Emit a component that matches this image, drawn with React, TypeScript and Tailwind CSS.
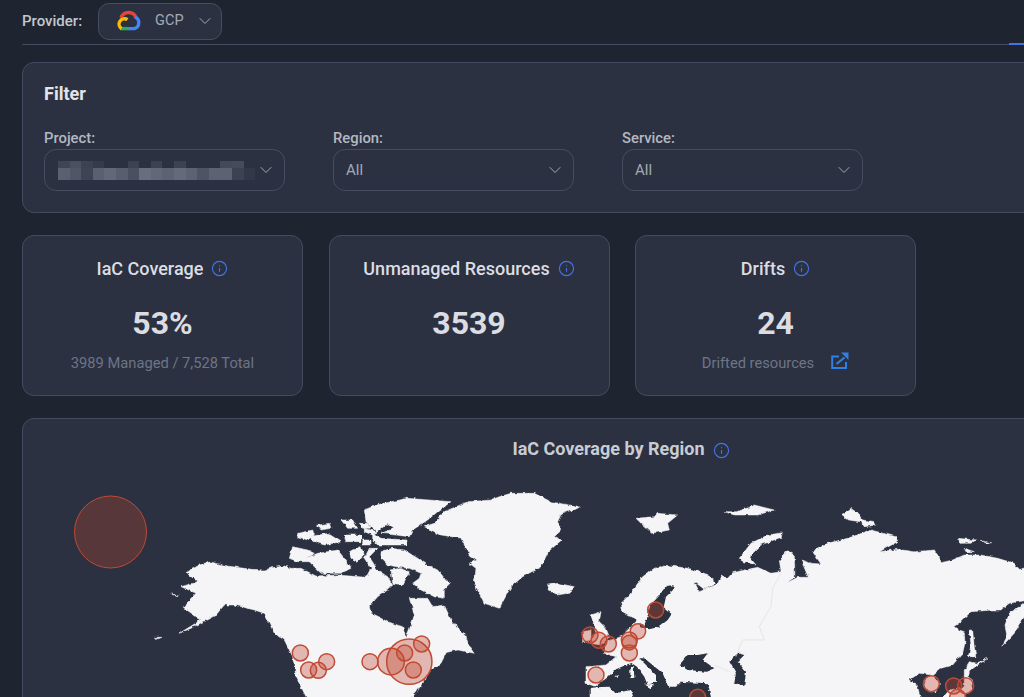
import { ChevronDown, Info } from "lucide-react";

const font = { fontFamily: "Roboto, 'Liberation Sans', sans-serif" };

// pixelated project name, the reference has it blurred out
const blurTop = [
    "bg-[#3f4555]", "bg-[#4a5060]", "bg-[#3c4252]", "bg-[#353b4b]", "bg-transparent", "bg-transparent",
    "bg-[#3c4252]", "bg-transparent", "bg-[#3c4252]", "bg-transparent", "bg-[#3c4252]", "bg-transparent",
    "bg-transparent", "bg-transparent", "bg-[#434959]", "bg-[#454b5b]", "bg-transparent",
];
const blurBottom = [
    "bg-[#5a6070]", "bg-[#505666]", "bg-[#3e4454]", "bg-[#5a6070]", "bg-[#626878]", "bg-[#585e6e]",
    "bg-[#4a5060]", "bg-[#686e7e]", "bg-[#626878]", "bg-[#5c6272]", "bg-[#646a7a]", "bg-[#5c6272]",
    "bg-[#4e5464]", "bg-[#5c6272]", "bg-[#5c6272]", "bg-[#3c4252]", "bg-[#323848]",
];

const naCircles = [
    [478, 519, 24], [503, 570, 24], [532, 571, 24], [557, 545, 24], [687, 545, 24], [750, 545, 40],
    [805, 545, 68], [791, 519, 24], [842, 492, 24], [817, 570, 24],
];
const euCircles = [
    [75, 585, 24], [57, 465, 24], [84, 481, 24], [112, 492, 24], [175, 480, 24], [175, 488, 22],
    [175, 519, 24], [201, 454, 23], [254, 390, 24], [380, 652, 24], [1081, 611, 24], [1148, 618, 24],
    [1184, 617, 24], [1160, 652, 24],
];

function GcpLogo() {
    return (
        <svg width="27" height="22" viewBox="0 0 27 22" fill="none" strokeWidth="3.4">
            <path d="M6 8 A8 8 0 0 1 21 7.5" stroke="#ea4335" />
            <path d="M20 7 A6.2 6.2 0 0 1 19.5 18.6 H13" stroke="#4285f4" />
            <path d="M13.5 18.6 H5" stroke="#34a853" />
            <path d="M12.5 9.6 A5.4 5.4 0 1 0 6.5 18.6" stroke="#fbbc05" />
        </svg>
    );
}

function ExternalIcon() {
    return (
        <svg width="18" height="18" viewBox="0 0 18 18" className="mt-[-5px] ml-[17px] text-[#2f7fe6]">
            <path d="M8 4.5 H1.2 V16 H15 V10" fill="none" stroke="currentColor" strokeWidth="2" />
            <path d="M5.5 12 L13.5 5.5" fill="none" stroke="currentColor" strokeWidth="2.2" />
            <path d="M10 0.6 H17.5 V8 Z" fill="currentColor" />
        </svg>
    );
}

function WorldMap() {
    const land = { fill: "#f5f5f7", stroke: "#f5f5f7", strokeWidth: 1.5, strokeLinejoin: "round" as const };
    return (
        <svg className="block h-[219px] w-[1002px]" viewBox="22 478 1002 219">
            <defs>
                {/* roughens the traced coastlines */}
                <filter id="coast" x="22" y="478" width="1002" height="219" filterUnits="userSpaceOnUse" primitiveUnits="userSpaceOnUse">
                    <feTurbulence type="fractalNoise" baseFrequency="0.22" numOctaves="2" seed="4" />
                    <feDisplacementMap in="SourceGraphic" scale="3.5" xChannelSelector="R" yChannelSelector="G" />
                </filter>
            </defs>
            <g filter="url(#coast)">
                <g transform="translate(140 480) scale(0.3333)" {...land}>
                    {/* north america mainland */}
                    <path d="M135 278 L175 255 L205 245 L260 258 L330 268 L370 270 L400 262 L430 258 L450 265 L480 265 L525 288 L590 285 L675 292 L690 265 L670 235 L685 205 L710 205 L685 230 L710 270 L740 290 L755 315 L740 330 L710 350 L685 380 L690 400 L740 425 L785 440 L795 475 L812 430 L820 405 L805 355 L860 355 L875 380 L910 375 L930 420 L975 470 L985 500 L1000 520 L950 510 L905 520 L890 500 L930 490 L900 550 L870 570 L850 600 L825 640 L800 660 L500 660 L465 590 L455 530 L430 480 L400 460 L370 400 L340 390 L280 375 L250 375 L225 405 L150 445 L115 460 L180 420 L130 385 L145 360 L165 340 L120 320 L170 305 Z" />
                    <path d="M92 342 L112 348 L108 350 Z M40 472 L60 472 L50 476 Z" />
                    {/* greenland */}
                    <path d="M850 140 L880 130 L910 95 L980 65 L1050 60 L1075 50 L1110 40 L1180 40 L1230 65 L1312 80 L1262 100 L1250 125 L1262 150 L1240 170 L1262 180 L1222 215 L1200 260 L1145 290 L1110 320 L1075 385 L1030 370 L1000 310 L1005 265 L985 250 L1005 240 L985 225 L960 175 L900 165 Z" />
                    <path d="M1220 315 L1250 310 L1300 320 L1280 340 L1250 345 L1225 330 Z" />
                </g>
                <g transform="translate(280 490) scale(0.3333)" {...land}>
                    {/* arctic archipelago */}
                    <path d="M300 185 L330 175 L370 180 L410 205 L440 225 L470 240 L490 265 L510 280 L490 300 L490 325 L460 320 L420 300 L395 280 L415 265 L420 250 L385 235 L355 232 L320 225 L300 205 Z" />
                    <path d="M25 205 L35 170 L80 180 L100 190 L75 205 L110 190 L170 180 L190 205 L210 235 L180 250 L120 250 L85 215 L50 215 Z" />
                    <path d="M50 130 L95 120 L100 135 L80 150 L50 140 Z" />
                    <path d="M85 140 L140 130 L180 155 L130 165 L100 155 Z" />
                    <path d="M110 105 L145 100 L150 115 L120 120 Z" />
                    <path d="M180 90 L215 90 L230 115 L200 115 Z" />
                    <path d="M190 135 L240 135 L240 155 L195 155 Z" />
                    <path d="M245 150 L270 150 L270 165 L245 165 Z" />
                    <path d="M235 100 L260 100 L270 115 L245 115 Z" />
                    <path d="M250 115 L290 125 L275 135 L250 125 Z" />
                    <path d="M275 130 L300 145 L375 150 L375 165 L290 165 L275 150 Z" />
                    <path d="M205 185 L240 170 L250 195 L230 215 L210 205 Z" />
                    <path d="M250 60 L285 45 L380 25 L510 35 L470 65 L440 90 L395 120 L385 140 L300 130 L340 115 L320 100 L290 125 L255 95 Z" />
                    <path d="M330 240 L355 235 L385 245 L365 285 L335 280 Z" />
                    <path d="M395 255 L415 255 L410 268 L395 268 Z" fill="#2b3141" stroke="none" />
                </g>
                <g transform="translate(570 480) scale(0.3333)" {...land}>
                    {/* eurasia */}
                    <path d="M150 370 L175 345 L215 290 L250 265 L280 255 L350 265 L400 280 L425 295 L430 312 L400 328 L370 305 L385 335 L440 312 L450 285 L470 295 L485 278 L560 262 L600 280 L630 275 L625 240 L650 212 L670 225 L672 290 L648 308 L680 292 L712 292 L690 240 L720 250 L750 252 L725 215 L770 190 L830 175 L900 150 L975 170 L980 185 L925 215 L980 208 L1030 215 L1090 210 L1100 225 L1110 248 L1145 240 L1180 225 L1230 225 L1280 235 L1330 250 L1345 268 L1375 260 L1375 360 L1315 370 L1290 390 L1265 390 L1200 395 L1170 425 L1148 440 L1165 450 L1180 455 L1182 490 L1175 520 L1145 555 L1110 565 L1085 585 L1045 580 L1015 600 L1040 620 L1050 660 L60 660 L60 625 L80 622 L45 610 L45 560 L105 555 L135 530 L100 520 L105 485 L150 470 L180 440 L195 425 L190 415 L155 395 Z" />
                    <path d="M60 405 L90 395 L85 425 L105 445 L115 470 L90 495 L55 490 L75 460 Z" />
                    <path d="M35 455 L60 450 L60 480 L35 485 Z" />
                    <path d="M195 115 L250 110 L260 100 L320 105 L290 130 L295 150 L245 160 L215 135 Z" />
                    <path d="M460 95 L500 95 L550 75 L610 90 L560 105 L490 105 Z" />
                    <path d="M505 235 L540 190 L590 165 L635 158 L630 172 L570 195 L535 230 L555 255 L520 245 Z" />
                    <path d="M810 105 L840 85 L860 100 L875 120 L910 125 L915 135 L880 140 L870 125 L830 120 Z" />
                    <path d="M1160 175 L1215 180 L1200 190 L1170 190 Z M1230 183 L1262 188 L1245 191 Z M1180 205 L1210 215 L1185 215 Z" />
                    <path d="M1195 450 L1205 450 L1210 500 L1215 530 L1192 530 L1200 495 Z" />
                    <path d="M1375 360 L1315 400 L1302 435 L1308 470 L1292 500 L1330 460 L1375 385 Z" />
                    <path d="M1180 570 L1195 545 L1220 550 L1250 535 L1220 555 L1200 570 L1190 590 L1205 600 L1200 630 L1170 660 L1110 660 L1135 630 L1180 620 Z" />
                    <path d="M1060 600 L1085 585 L1105 610 L1095 635 L1075 635 L1065 620 Z" />
                    <path d="M0 75 L25 82 L0 95 Z M0 318 L8 325 L0 332 Z" />
                </g>
                <g transform="translate(580 590) scale(0.3333)" fill="#2b3141">
                    {/* baltic, med, black sea, caspian */}
                    <path d="M278 -14 L255 -12 L232 20 L208 45 L198 85 L190 105 L175 100 L178 112 L205 118 L235 110 L260 90 L272 72 L248 52 L255 20 L276 0 Z" />
                    <path d="M40 292 L80 262 L105 238 L150 218 L168 230 L190 260 L200 285 L225 275 L225 255 L175 205 L190 205 L245 250 L262 290 L285 290 L300 275 L380 280 L392 330 L160 330 L150 300 L100 310 L85 290 Z" />
                    <path d="M295 225 L320 195 L350 195 L380 190 L365 210 L400 235 L375 245 L320 240 Z" />
                    <path d="M445 215 L470 190 L490 195 L470 215 L495 245 L490 285 L460 280 L465 250 Z" />
                    <path fill="#f5f5f7" d="M148 228 L158 228 L160 264 L148 264 Z M192 284 L215 282 L212 296 Z M100 258 L112 256 L110 264 Z" />
                    <path fill="#f5f5f7" d="M258 250 L275 250 L290 280 L272 285 Z" />
                </g>
            </g>
            <g transform="translate(570 480) scale(0.3333)" fill="none" stroke="#dcdce0" strokeWidth="2">
                <path d="M630 280 L605 325 L600 380 L565 440 L580 480 L515 480 L495 530 M430 555 L475 575" />
            </g>
            <circle cx="109.5" cy="532" r="36" fill="#c0452f" fillOpacity="0.3" stroke="#c04a33" strokeWidth="1" />
            <g transform="translate(140 480) scale(0.3333)" fill="#c0452f" fillOpacity="0.35" stroke="#c04a33" strokeWidth="4.5">
                {naCircles.map(([cx, cy, r]) => (
                    <circle key={`${cx}-${cy}`} cx={cx} cy={cy} r={r} />
                ))}
            </g>
            <g transform="translate(570 480) scale(0.3333)" fill="#c0452f" fillOpacity="0.35" stroke="#c04a33" strokeWidth="4.5">
                {euCircles.map(([cx, cy, r]) => (
                    <circle key={`${cx}-${cy}`} cx={cx} cy={cy} r={r} />
                ))}
            </g>
        </svg>
    );
}

function Select({ label, value }: { label: string; value?: string }) {
    return (
        <div className="w-[241px]">
            <p className="text-[14.8px] leading-[17px] font-medium text-[#b4b8c2]">{label}</p>
            <div className="mt-[2px] flex h-[42px] items-center justify-between rounded-[12px] border border-[#454d60] pr-[8px] pl-[12px]">
                {value ? (
                    <span className="text-[15px] text-[#a5a9b4]">{value}</span>
                ) : (
                    <div className="ml-[1px] w-[197px] blur-[0.5px]">
                        <div className="flex">
                            {blurTop.map((c, i) => <div key={i} className={`h-[7px] w-[11.6px] ${c}`} />)}
                        </div>
                        <div className="flex">
                            {blurBottom.map((c, i) => <div key={i} className={`h-[12px] w-[11.6px] ${c}`} />)}
                        </div>
                    </div>
                )}
                <ChevronDown size={20} strokeWidth={1.2} className="text-[#a5a9b4]" />
            </div>
        </div>
    );
}

function StatCard({ title, value, children }: { title: string; value: string; children?: React.ReactNode }) {
    return (
        <div className="flex h-[161px] w-[281px] flex-col items-center rounded-[12px] border border-[#434b5e] bg-[#2b3141]">
            <div className="mt-[22px] flex h-[20px] items-center gap-[8px]">
                <span className="text-[18px] font-medium text-[#dcdde2]">{title}</span>
                <Info size={17} strokeWidth={1.6} className="text-[#4274e6]" />
            </div>
            <p className="mt-[27px] text-[32px] leading-[36px] font-bold text-[#dcdde2]">{value}</p>
            <div className="mt-[12px] flex h-[20px] items-center text-[14.7px] text-[#6d7587]">{children}</div>
        </div>
    );
}

export default function App() {
    return (
        <div className="h-[697px] w-[1024px] overflow-hidden bg-[#1e2530] pl-[22px]" style={font}>
            <div className="relative flex h-[45px] w-[1002px] items-center gap-[16px] border-b border-[#434b5e] pb-[2px]">
                <span className="text-[15px] font-medium text-[#c4c7cf]">Provider:</span>
                <div className="flex h-[37px] w-[124px] items-center rounded-[11px] border border-[#454d60] bg-[#2b3141] pl-[16px]">
                    <GcpLogo />
                    <span className="ml-[13px] text-[14.5px] text-[#a5a9b4]">GCP</span>
                    <ChevronDown size={20} strokeWidth={1.2} className="ml-[11px] text-[#a5a9b4]" />
                </div>
                <div className="absolute right-0 bottom-[-1px] h-[2px] w-[15px] bg-[#4274e6]" />
            </div>

            <div className="mt-[17px] h-[151px] w-[1198px] rounded-[12px] border border-[#434b5e] bg-[#2b3141] pt-[21px] pl-[21px]">
                <h2 className="text-[18px] leading-[20px] font-bold text-[#e3e4e8]">Filter</h2>
                <div className="mt-[26px] flex gap-[48px]">
                    <Select label="Project:" />
                    <Select label="Region:" value="All" />
                    <Select label="Service:" value="All" />
                </div>
            </div>

            <div className="mt-[22px] flex gap-[25.5px]">
                <StatCard title="IaC Coverage" value="53%">3989 Managed / 7,528 Total</StatCard>
                <StatCard title="Unmanaged Resources" value="3539" />
                <StatCard title="Drifts" value="24">
                    Drifted resources
                    <ExternalIcon />
                </StatCard>
            </div>

            <div className="mt-[22px] h-[300px] w-[1198px] rounded-[12px] border border-[#434b5e] bg-[#2b3141]">
                <div className="flex h-[59px] items-start justify-center gap-[8px] pt-[20px]">
                    <span className="text-[18px] leading-[20px] font-bold text-[#c9ccd3]">IaC Coverage by Region</span>
                    <Info size={17} strokeWidth={1.6} className="mt-[3px] text-[#4274e6]" />
                </div>
                <WorldMap />
            </div>
        </div>
    );
}
